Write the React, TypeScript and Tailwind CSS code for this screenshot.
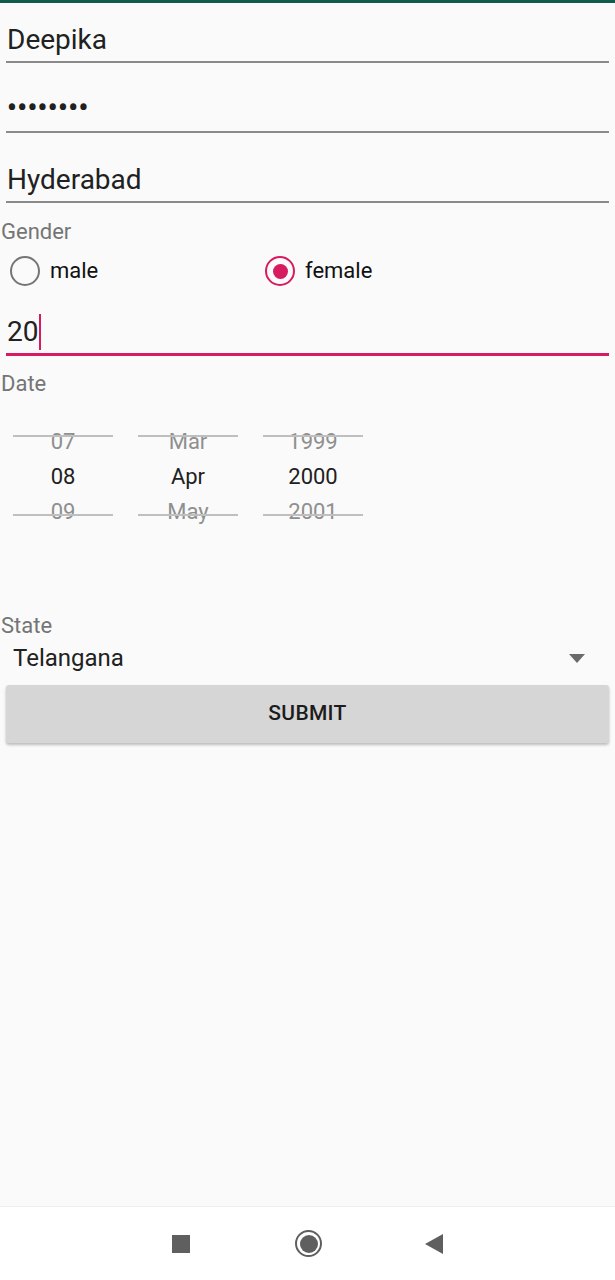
import { useState } from "react";

const font = "font-['Roboto','Noto_Sans',sans-serif]";

function TextField({
  value,
  focused = false,
  className = "",
}: {
  value: React.ReactNode;
  focused?: boolean;
  className?: string;
}) {
  return (
    <div
      className={`mx-[6px] pb-[5px] ${
        focused ? "border-b-[3px] border-[#d81b60]" : "border-b-2 border-[#8a8a8a]"
      } ${className}`}
    >
      <div className="flex items-center h-[32px] pl-px text-[28px] leading-[32px] text-[#212121]">
        {value}
      </div>
    </div>
  );
}

function Radio({ label, checked }: { label: string; checked: boolean }) {
  return (
    <div className="flex items-center gap-[10px]">
      <div
        className={`w-[30px] h-[30px] rounded-full border-[2.5px] flex items-center justify-center ${
          checked ? "border-[#d81b60]" : "border-[#757575]"
        }`}
      >
        {checked && <div className="w-[15px] h-[15px] rounded-full bg-[#d81b60]" />}
      </div>
      <span className="text-[22px] leading-[30px] text-[#111]">{label}</span>
    </div>
  );
}

function PickerColumn({ items }: { items: [string, string, string] }) {
  return (
    <div className="relative w-[100px] flex flex-col">
      {items.map((it, i) => (
        <div
          key={it}
          className={`h-[35px] text-center text-[22px] leading-[35px] ${
            i === 1 ? "text-[#212121]" : "text-[#8f8f8f]"
          }`}
        >
          {it}
        </div>
      ))}
      <div className="absolute left-0 right-0 top-[11px] h-[2px] bg-[#bfbfbf]" />
      <div className="absolute left-0 right-0 top-[90px] h-[2px] bg-[#bfbfbf]" />
    </div>
  );
}

export default function App() {
  const [gender] = useState<"male" | "female">("female");

  return (
    <div className={`${font} min-h-screen h-[1280px] flex flex-col bg-[#fafafa]`}>
      <div className="h-[3px] bg-[#0f5c4f]" />

      <TextField value="Deepika" className="pt-[21px]" />
      <TextField
        value={<span className="tracking-[0.5px] text-[27px] font-bold -mt-[4px]">••••••••</span>}
        className="pt-[31px]"
      />
      <TextField value="Hyderabad" className="pt-[31px]" />

      <div className="mt-[17px] pl-px text-[22px] leading-[24px] text-[#757575]">Gender</div>

      <div className="mt-[3px] h-[48px] flex items-center pl-[10px]">
        <div className="w-[255px]">
          <Radio label="male" checked={gender === "male"} />
        </div>
        <Radio label="female" checked={gender === "female"} />
      </div>

      <TextField
        focused
        className="pt-[21px] pb-[4px]"
        value={
          <>
            20
            <span className="ml-px inline-block w-[2px] h-[36px] bg-[#d81b60]" />
          </>
        }
      />

      <div className="mt-[16px] pl-px text-[22px] leading-[24px] text-[#757575]">Date</div>

      <div className="mt-[28px] pl-[13px] flex gap-[25px]">
        <PickerColumn items={["07", "08", "09"]} />
        <PickerColumn items={["Mar", "Apr", "May"]} />
        <PickerColumn items={["1999", "2000", "2001"]} />
      </div>

      <div className="mt-[85px] pl-px text-[22px] leading-[24px] text-[#757575]">State</div>

      <div className="mt-[4px] h-[32px] flex items-center justify-between pl-[13px] pr-[30px]">
        <span className="text-[24px] leading-[32px] text-[#212121]">Telangana</span>
        <svg width="16" height="9" viewBox="0 0 16 9">
          <path d="M0 0h16L8 9z" fill="#6b6b6b" />
        </svg>
      </div>

      <button className="mt-[11px] mx-[6px] h-[58px] rounded-[3px] bg-[#d6d6d6] shadow-[0_2px_3px_rgba(0,0,0,0.25)] text-[21px] font-medium tracking-[0.3px] text-[#1c1c1c]">
        SUBMIT
      </button>

      <div className="flex-1" />

      <div className="h-[74px] bg-white border-t border-[#eeeeee] flex items-center justify-center">
        <div className="flex items-center">
          <div className="w-[18px] h-[18px] bg-[#5f5f5f]" />
          <div className="ml-[105px] w-[27px] h-[27px] rounded-full border-2 border-[#5f5f5f] flex items-center justify-center">
            <div className="w-[18px] h-[18px] rounded-full bg-[#5f5f5f]" />
          </div>
          <svg className="ml-[103px]" width="18" height="20" viewBox="0 0 18 20">
            <path d="M18 0v20L0 10z" fill="#5f5f5f" />
          </svg>
        </div>
      </div>
    </div>
  );
}
